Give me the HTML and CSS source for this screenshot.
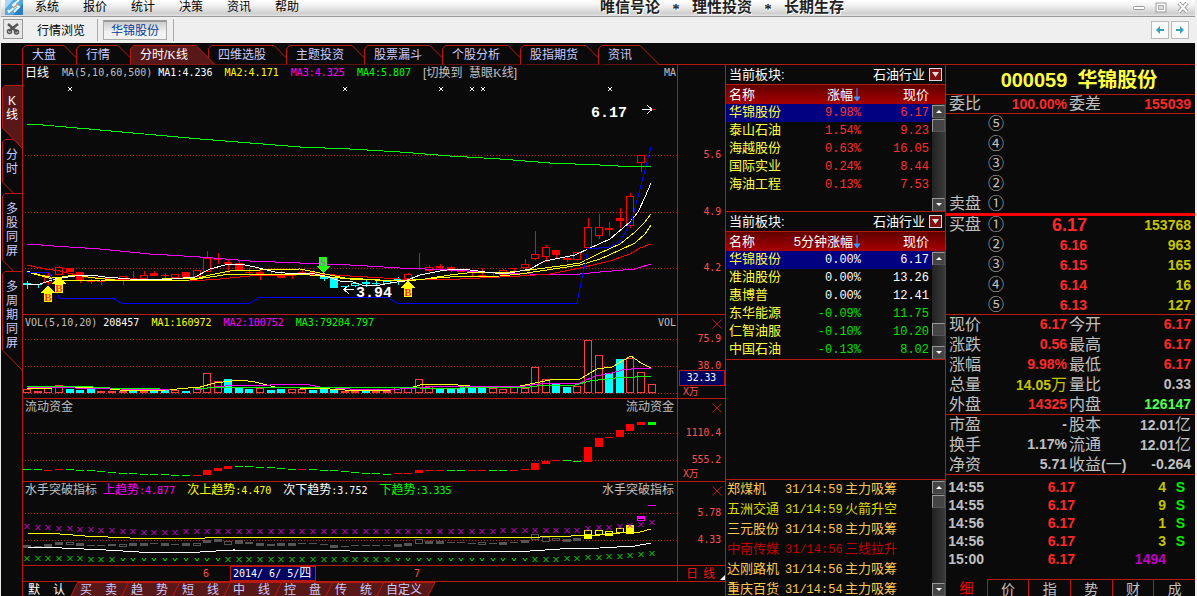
FILE: index.html
```html
<!DOCTYPE html>
<html lang="zh-CN">
<head>
<meta charset="utf-8">
<title>000059 华锦股份</title>
<link rel="stylesheet" href="styles.css">
</head>
<body>
<div class="app">
  <header class="titlebar">
    <svg class="logo" viewBox="0 0 18 15"><rect width="18" height="15" fill="#55a7dc"/><path d="M0 0H8L0 9Z" fill="#a8d8f2"/><path d="M18 3V15H8Z" fill="#2a7fc0"/><path d="M14 0L8 5L10 7L4 12L3 10M9 4L14 7L9 12" fill="none" stroke="#e8f6ff" stroke-width="2"/><path d="M8 8L13 4" stroke="#d8944c" stroke-width="1.500"/></svg>
    <nav class="menu"><button>系统</button><button>报价</button><button>统计</button><button>决策</button><button>资讯</button><button>帮助</button></nav>
    <div class="slogan"><span>唯信号论</span><i>*</i><span>理性投资</span><i>*</i><span>长期生存</span></div>
    <div class="winbtns">
      <button aria-label="最小化"><svg viewBox="0 0 14 12"><rect x="1.500" y="4.500" width="11" height="3" rx="1" fill="#fff" stroke="#999"/></svg></button>
      <button aria-label="最大化"><svg viewBox="0 0 14 12"><rect x="2" y="1" width="10" height="9" fill="#fff" stroke="#999"/><rect x="4.500" y="3.500" width="5" height="4" fill="#ddd" stroke="#aaa"/></svg></button>
      <button aria-label="关闭"><svg viewBox="0 0 14 12"><path d="M3 1L11 10M11 1L3 10" stroke="#999" stroke-width="4"/><path d="M3 1L11 10M11 1L3 10" stroke="#fff" stroke-width="2"/></svg></button>
    </div>
  </header>
  <div class="toolbar">
    <button class="tool" aria-label="工具"><svg viewBox="0 0 18 18"><path d="M4 4L13 12M14 4L5 11" stroke="#555" stroke-width="2.500"/><circle cx="5.500" cy="11.500" r="2" fill="none" stroke="#555" stroke-width="1.500"/><circle cx="12.500" cy="12" r="2" fill="none" stroke="#555" stroke-width="1.500"/></svg></button>
    <button class="plain">行情浏览</button><span class="sep"></span><button class="current">华锦股份</button><span class="sep"></span>
    <div class="history">
      <button aria-label="后退"><svg viewBox="0 0 16 16"><path d="M4 8L8 4V7H12V9H8V12Z" fill="#3aa0c0"/></svg></button>
      <button aria-label="前进"><svg viewBox="0 0 16 16"><path d="M12 8L8 4V7H4V9H8V12Z" fill="#3aa0c0"/></svg></button>
    </div>
  </div>
  <nav class="toptabs">
    <button class="short" data-tab="top">大盘</button><button class="short" data-tab="top">行情</button><button class="on" data-tab="top">分时/<b>K</b>线</button><button data-tab="top">四维选股</button><button data-tab="top">主题投资</button><button data-tab="top">股票漏斗</button><button data-tab="top">个股分析</button><button data-tab="top">股指期货</button><button class="short" data-tab="top">资讯</button>
  </nav>
  <main class="main">
    <nav class="side">
      <button class="on s2" data-tab="side"><span>K</span><span>线</span></button>
      <button class="s2" data-tab="side"><span>分</span><span>时</span></button>
      <button class="s4" data-tab="side"><span>多</span><span>股</span><span>同</span><span>屏</span></button>
      <button class="s5" data-tab="side"><span>多</span><span>周</span><span>期</span><span>同</span><span>屏</span></button>
    </nav>
    <section class="charts">
      <div class="pane">
        <div class="plot">
          <div class="cap"><span class="white">日线</span><code class="gap">MA(5,10,60,500)</code><code class="white">MA1:4.236</code><code class="yellow m2">MA2:4.171</code><code class="mag m2">MA3:4.325</code><code class="lime m2">MA4:5.807</code><span class="m2">[切换到&nbsp; 慧眼<b>K</b>线]</span><code class="end">MA</code></div>
          <svg id="kline" viewBox="23 81 654 233" preserveAspectRatio="none"></svg>
        </div>
        <div class="axis"><div class="cap"></div><svg viewBox="677 81 48 233" preserveAspectRatio="none"><text x="721" y="158">5.6</text><text x="721" y="215">4.9</text><text x="721" y="271">4.2</text></svg></div>
      </div>
      <div class="pane">
        <div class="plot">
          <div class="cap"><code>VOL(5,10,20)</code><code class="white m1">208457</code><code class="yellow m2">MA1:160972</code><code class="mag m2">MA2:100752</code><code class="lime m2">MA3:79204.797</code><code class="end">VOL</code></div>
          <svg id="volume" viewBox="23 331 654 67" preserveAspectRatio="none"></svg>
        </div>
        <div class="axis"><div class="cap"><button class="close" aria-label="关闭"><svg viewBox="0 0 10 10"><path d="M.5 .5L9.500 9.500M9.500 .5L.5 9.500"/></svg></button></div><svg viewBox="677 331 48 67" preserveAspectRatio="none"><text x="721" y="342">75.9</text><text x="721" y="369">38.0</text><text x="698" y="395">X万</text><rect x="678.500" y="370.500" width="46" height="15" fill="#000060" stroke="#bb1810"/><text x="716" y="381" class="wt">32.33</text></svg></div>
      </div>
      <div class="pane">
        <div class="plot">
          <div class="cap"><span>流动资金</span><span class="end">流动资金</span></div>
          <svg id="flow" viewBox="23 415 654 66" preserveAspectRatio="none"></svg>
        </div>
        <div class="axis"><div class="cap"><button class="close" aria-label="关闭"><svg viewBox="0 0 10 10"><path d="M.5 .5L9.500 9.500M9.500 .5L.5 9.500"/></svg></button></div><svg viewBox="677 415 48 66" preserveAspectRatio="none"><text x="721" y="436">1110.4</text><text x="721" y="463">555.2</text><text x="698" y="477">X万</text></svg></div>
      </div>
      <div class="pane">
        <div class="plot">
          <div class="cap"><span>水手突破指标</span><span class="mag m1">上趋势<code>:4.877</code></span><span class="yellow m2">次上趋势<code>:4.470</code></span><span class="white m2">次下趋势<code>:3.752</code></span><span class="lime m2">下趋势<code>:3.335</code></span><span class="end">水手突破指标</span></div>
          <svg id="trend" viewBox="23 498 654 67" preserveAspectRatio="none"></svg>
        </div>
        <div class="axis"><div class="cap"><button class="close" aria-label="关闭"><svg viewBox="0 0 10 10"><path d="M.5 .5L9.500 9.500M9.500 .5L.5 9.500"/></svg></button></div><svg viewBox="677 498 48 67" preserveAspectRatio="none"><text x="721" y="516">5.78</text><text x="721" y="543">4.33</text></svg></div>
      </div>
      <div class="dates">
        <div class="months"><code class="m6">6</code><span class="today"><code>2014/ 6/ 5/</code>四</span><code class="m7">7</code></div>
        <div class="period"><span>日</span><span>线</span><svg viewBox="0 0 8 8"><path d="M8 0V8H0Z" fill="#fff"/></svg></div>
      </div>
      <nav class="bottomtabs">
        <button class="first">默<i></i>认</button><button data-tab="bottom">买<i></i>卖</button><button data-tab="bottom">趋<i></i>势</button><button data-tab="bottom">短<i></i>线</button><button data-tab="bottom">中<i></i>线</button><button data-tab="bottom">控<i></i>盘</button><button data-tab="bottom">传<i></i>统</button><button data-tab="bottom">自定义</button>
      </nav>
    </section>

    <section class="lists">
      <div class="board">
        <div class="pick"><label for="b1">当前板块:</label><select id="b1"><option>石油行业</option></select><svg viewBox="0 0 13 13"><rect x=".5" y=".5" width="12" height="12" fill="#801010" stroke="#ddd"/><path d="M3 4H10L6.500 9Z" fill="#ddd"/></svg></div>
        <div class="body">
          <table><thead><tr><th>名称</th><th>涨幅<svg class="down" viewBox="0 0 8 14"><path d="M4 0V13M1 9L4 13L7 9Z" fill="#3a90ff" stroke="#3a90ff"/></svg></th><th>现价</th></tr></thead>
          <tbody class="red">
            <tr class="sel"><td>华锦股份</td><td>9.98%</td><td>6.17</td></tr>
            <tr><td>泰山石油</td><td>1.54%</td><td>9.23</td></tr>
            <tr><td>海越股份</td><td>0.63%</td><td>16.05</td></tr>
            <tr><td>国际实业</td><td>0.24%</td><td>8.44</td></tr>
            <tr><td>海油工程</td><td>0.13%</td><td>7.53</td></tr>
          </tbody></table>
          <div class="bar"><div class="bhead"></div><div class="track"><button class="up" aria-label="上"></button><div class="thumb"></div><div class="fill"></div><button class="dn" aria-label="下"></button></div></div>
        </div>
      </div>
      <div class="board">
        <div class="pick"><label for="b2">当前板块:</label><select id="b2"><option>石油行业</option></select><svg viewBox="0 0 13 13"><rect x=".5" y=".5" width="12" height="12" fill="#801010" stroke="#ddd"/><path d="M3 4H10L6.500 9Z" fill="#ddd"/></svg></div>
        <div class="body">
          <table><thead><tr><th>名称</th><th>5分钟涨幅<svg class="down" viewBox="0 0 8 14"><path d="M4 0V13M1 9L4 13L7 9Z" fill="#3a90ff" stroke="#3a90ff"/></svg></th><th>现价</th></tr></thead>
          <tbody>
            <tr class="sel"><td>华锦股份</td><td>0.00%</td><td>6.17</td></tr>
            <tr><td>准油股份</td><td>0.00%</td><td>13.26</td></tr>
            <tr><td>惠博普</td><td>0.00%</td><td>12.41</td></tr>
            <tr class="green"><td>东华能源</td><td>-0.09%</td><td>11.75</td></tr>
            <tr class="green"><td>仁智油服</td><td>-0.10%</td><td>10.20</td></tr>
            <tr class="green"><td>中国石油</td><td>-0.13%</td><td>8.02</td></tr>
          </tbody></table>
          <div class="bar"><div class="bhead"></div><div class="track"><button class="up" aria-label="上"></button><div class="fill"></div><div class="thumb"></div><div class="low"></div><button class="dn" aria-label="下"></button></div></div>
        </div>
      </div>
      <div class="blank"></div>
      <div class="alerts">
        <table>
          <tr><td>郑煤机</td><td>31/14:59</td><td>主力吸筹</td></tr>
          <tr class="hot"><td>五洲交通</td><td>31/14:59</td><td>火箭升空</td></tr>
          <tr><td>三元股份</td><td>31/14:58</td><td>主力吸筹</td></tr>
          <tr class="rise"><td>中南传媒</td><td>31/14:56</td><td>三线拉升</td></tr>
          <tr><td>达刚路机</td><td>31/14:56</td><td>主力吸筹</td></tr>
          <tr><td>重庆百货</td><td>31/14:54</td><td>主力吸筹</td></tr>
        </table>
        <div class="bar"><div class="track"><button class="up" aria-label="上"></button><div class="thumb"></div><div class="fill"></div><button class="dn" aria-label="下"></button></div></div>
      </div>
    </section>

    <section class="quote">
      <h1>000059<span>华锦股份</span></h1>
      <div class="stats tight"><span>委比</span><b class="red">100.00%</b><span>委差</span><b class="red">155039</b></div>
      <div class="depth sell">
        <span></span><i>⑤</i><b></b><b></b><span></span><i>④</i><b></b><b></b><span></span><i>③</i><b></b><b></b><span></span><i>②</i><b></b><b></b><span>卖盘</span><i>①</i><b></b><b></b>
      </div>
      <div class="depth buy">
        <span>买盘</span><i>①</i><b class="big">6.17</b><b>153768</b><span></span><i>②</i><b>6.16</b><b>963</b><span></span><i>③</i><b>6.15</b><b>165</b><span></span><i>④</i><b>6.14</b><b>16</b><span></span><i>⑤</i><b>6.13</b><b>127</b>
      </div>
      <div class="stats">
        <span>现价</span><b class="red">6.17</b><span>今开</span><b class="red">6.17</b>
        <span>涨跌</span><b class="red">0.56</b><span>最高</span><b class="red">6.17</b>
        <span>涨幅</span><b class="red">9.98%</b><span>最低</span><b class="red">6.17</b>
        <span>总量</span><b class="gold">14.05<em>万</em></b><span>量比</span><b>0.33</b>
        <span>外盘</span><b class="red">14325</b><span>内盘</span><b class="bright">126147</b>
      </div>
      <div class="stats">
        <span>市盈</span><b>-</b><span>股本</span><b>12.01<em>亿</em></b>
        <span>换手</span><b>1.17%</b><span>流通</span><b>12.01<em>亿</em></b>
        <span>净资</span><b>5.71</b><span>收益<b>(</b>一<b>)</b></span><b>-0.264</b>
      </div>
      <table class="ticks">
        <tr><td>14:55</td><td>6.17</td><td>4</td><td>S</td></tr>
        <tr><td>14:55</td><td>6.17</td><td>9</td><td>S</td></tr>
        <tr><td>14:56</td><td>6.17</td><td>1</td><td>S</td></tr>
        <tr><td>14:56</td><td>6.17</td><td>3</td><td>S</td></tr>
        <tr><td>15:00</td><td>6.17</td><td class="purple">1494</td><td></td></tr>
      </table>
      <nav class="qtabs"><button class="on">细</button><button>价</button><button>指</button><button>势</button><button>财</button><button>成</button></nav>
    </section>
  </main>
</div>
<script src="charts.js"></script>
</body>
</html>
```
FILE: styles.css
```css
* { box-sizing: border-box; }
body {
  margin: 0;
  background: #0a0a0a;
  color: #c0c0c0;
  font: 12px/16px "Liberation Sans", "Noto Sans CJK SC", sans-serif;
}
button, select {
  margin: 0; padding: 0; border: 0; background: none;
  color: inherit; font: inherit; white-space: nowrap;
}
i, em { font-style: normal; }
svg { display: block; }
code { font: 10px/16px "DejaVu Sans Mono", monospace; }
.white { color: #fff; }
.yellow { color: #ff0; }
.mag { color: #f0f; }
.lime { color: #0f0; }
.red { color: #ff2828; }
.gold { color: #c4c400; }
.bright { color: #50ff50; }

.app {
  display: flex; flex-direction: column;
  height: 100vh; overflow: hidden;
  border-left: 1px solid #e8e8e8; border-right: 2px solid #efefef;
}

/* window chrome */
.titlebar {
  display: grid; grid-template-columns: 22px 1fr auto 1fr; flex: none;
  height: 17px; padding-left: 4px; overflow: hidden;
  background: linear-gradient(#fff, #f4f4f4 30%, #cfcfcf 85%, #e4e4e4);
  border-bottom: 1px solid #999; color: #000;
}
.logo { width: 18px; height: 15px; }
.menu { display: flex; gap: 24px; padding-left: 8px; }
.menu button { height: 14px; line-height: 14px; }
.slogan {
  display: flex; height: 15px; padding-left: 222px;
  font: bold 15px/14px "Liberation Serif", "Noto Sans CJK SC", serif;
  text-shadow: 1px 1px #fff, -1px 0 #fff; color: #222;
}
.slogan i { width: 32px; text-align: center; line-height: 18px; }
.winbtns { display: flex; justify-content: flex-end; gap: 8px; padding-right: 5px; }
.winbtns svg { width: 14px; height: 12px; }
.toolbar {
  display: flex; align-items: center; flex: none;
  height: 26px; padding: 0 6px 0 2px; background: #efefef; color: #000;
}
.tool { width: 20px; height: 20px; margin-bottom: 3px; border: 1px solid #999; background: #e8e8e8; }
.tool svg { width: 18px; height: 18px; }
.plain { padding: 0 12px 0 14px; margin-top: 2px; }
.sep { width: 1px; height: 22px; background: #aaa; }
.current {
  width: 64px; height: 20px; margin: 0 6px 0 5px; color: #003c9c;
  border: 1px solid #aaa; border-top: 2px solid #999;
  background: linear-gradient(#ccc, #f2f2f2 60%);
}
.history { display: flex; gap: 2px; margin-left: auto; }
.history button { width: 18px; height: 18px; border: 1px solid #bbb; background: #fafafa; }
.history svg { width: 16px; height: 16px; }

/* outlined tabs */
.toptabs {
  display: flex; flex: none; height: 22px; padding: 2px 0 0 21px;
  border-bottom: 1px solid #bb1810; color: #ccf;
}
[data-tab] { position: relative; z-index: 0; }
.shape {
  position: absolute; z-index: -1; top: 0; left: 0; overflow: visible;
  fill: #0a0a0a; stroke: #bb1810;
}
.toptabs button { width: 78px; padding-left: 10px; text-align: left; }
.toptabs .short { width: 54px; }
.toptabs .on, .side .on { z-index: 1; color: #fff; }
.on > .shape { fill: #581818; }
b { font-weight: normal; }
.toptabs b, .cap b { font-family: "Liberation Serif", serif; }

.main {
  display: grid; grid-template-columns: 22px minmax(0, 1fr) 220px 249px;
  flex: 1; min-height: 0;
}
.side {
  display: flex; flex-direction: column; padding-top: 20px;
  border-right: 1px solid #bb1810; color: #ccf;
}
.side button {
  display: flex; flex-direction: column; align-items: center;
  width: 21px; padding: 9px 0 0 1px; line-height: 14px;
}
.side span:first-child { font-family: "Liberation Serif", "Noto Sans CJK SC", serif; }
.side .s2 { height: 54px; }
.side .s4 { height: 78px; }
.side .s5 { height: 90px; }

.charts {
  display: grid; min-width: 0; min-height: 0;
  grid-template-rows: minmax(0, 250fr) minmax(0, 84fr) minmax(0, 83fr) minmax(0, 84fr) 16px 14px;
  border-right: 1px solid #bb1810;
}
.pane { display: grid; grid-template-columns: minmax(0, 1fr) 48px; border-bottom: 1px solid #bb1810; min-height: 0; }
.plot, .axis { display: flex; flex-direction: column; min-width: 0; min-height: 0; }
.plot > svg, .axis > svg { flex: 1; width: 100%; min-height: 0; }
.axis { border-left: 1px solid #bb1810; }
.axis text { font: 10px "DejaVu Sans Mono", "Noto Sans CJK SC", monospace; fill: #ff5050; text-anchor: end; }
.axis .wt { fill: #fff; }
.cap { display: flex; flex: none; height: 16px; padding: 0 1px 0 2px; white-space: nowrap; }
.cap .gap { margin: 0 6px 0 13px; }
.m1 { margin-left: 6px; }
.m2 { margin-left: 12px; }
.end { margin-left: auto; }
.cap span.end { padding-right: 2px; }
.close { margin: 4px 2px 0 auto; width: 10px; height: 10px; }
.close path { stroke: #bb1810; }
#kline, #volume, #flow, #trend { shape-rendering: crispEdges; }
.note { font: bold 15px "Liberation Mono", monospace; fill: #fff; }
.flag { font: bold 11px "Liberation Serif", serif; text-anchor: middle; }

.dates { display: grid; grid-template-columns: minmax(0, 1fr) 48px; border-bottom: 1px solid #bb1810; }
.months { display: flex; height: 15px; color: #ff5050; }
.m6 { margin-left: 180px; width: 27px; }
.months .m7 { margin-left: 98px; }
.today {
  display: flex; width: 86px; padding-left: 2px; line-height: 13px;
  background: #000060; border: 1px solid #bb1810; color: #fff; white-space: pre;
}
.today code { line-height: 13px; }
.period { display: flex; gap: 5px; padding-left: 8px; color: #f01010; border-left: 1px solid #bb1810; }
.period svg { width: 7px; height: 7px; margin: 8px 0 0 auto; }
.bottomtabs { display: flex; overflow: hidden; color: #ccf; }
.bottomtabs button { display: flex; width: 51px; height: 16px; padding-left: 6px; line-height: 16px; flex: none; }
.bottomtabs .first { padding-left: 5px; color: #fff; }
.bottomtabs i { width: 13px; }
.bottomtabs .shape { fill: #581818; }

/* sector lists */
.lists { display: flex; flex-direction: column; min-height: 0; border-right: 1px solid #bb1810; font-size: 13px; }
.pick { display: flex; align-items: center; height: 20px; padding: 0 3px 0 3px; border-bottom: 1px solid #bb1810; color: #fff; line-height: 18px; }
.pick select { margin-left: auto; appearance: none; outline: none; height: 18px; }
.pick > svg { width: 13px; height: 13px; margin-left: 3px; }
.body { display: flex; border-bottom: 1px solid #bb1810; min-height: 127px; }
.lists table { flex: 1; border-collapse: collapse; align-self: flex-start; table-layout: fixed; }
.lists th { height: 19px; padding: 0; font-weight: normal; color: #fff; text-align: right; line-height: 18px; }
.lists thead, .bhead { background: linear-gradient(#600000, #a80000); }
.lists th:first-child { text-align: left; padding-left: 3px; width: 60px; }
.lists th:last-child { width: 71px; padding-right: 3px; }
.down { display: inline-block; width: 8px; height: 14px; vertical-align: -3px; }
.lists td { height: 18px; padding: 0; line-height: 18px; color: #fff; text-align: right; font-family: "Liberation Mono", "Noto Sans CJK SC", monospace; font-size: 12px; }
.lists .board td:first-child { padding-left: 3px; text-align: left; color: #ff4; font-size: 13px; }
.board td:last-child { padding-right: 3px; }
.lists .red td { color: #ff3030; }
.lists .green td { color: #00e000; }
.lists tr.sel { background: #000080; }
.bar { display: flex; flex-direction: column; width: 13px; flex: none; }
.bhead { height: 19px; }
.track { display: flex; flex-direction: column; flex: 1; background: linear-gradient(90deg, #222, #3a3a3a); padding-top: 1px; }
.track button, .thumb { height: 13px; flex: none; border: 1px solid #888; border-color: #999 #555 #555 #999; background: #444; }
.thumb { margin-top: 1px; }
.fill { flex: 1; }
.low { height: 10px; }
.up::before, .dn::before { content: ""; display: block; width: 0; margin: auto; border: 3px solid transparent; }
.up::before { border-top: 0; border-bottom-color: #fff; }
.dn::before { border-bottom: 0; border-top-color: #fff; }
.blank { height: 120px; border-bottom: 1px solid #bb1810; }
.alerts { display: flex; flex: 1; min-height: 0; overflow: hidden; }
.lists .alerts td { height: 20px; font-size: 12px; color: #ffc850; text-align: left; padding-left: 1px; }
.lists .alerts td:first-child, .lists .alerts td:last-child { font-size: 13px; }
.lists .alerts td:first-child { width: 58px; }
.lists .alerts td:nth-child(2) { width: 60px; }
.lists .alerts .hot td { color: #dcdc00; }
.lists .alerts .rise td { color: #c00000; }

/* quote panel */
.quote { display: flex; flex-direction: column; min-height: 0; overflow: hidden; font-size: 16px; }
.quote b { font-family: "Liberation Sans", "Noto Sans CJK SC", sans-serif; font-size: 14px; font-weight: bold; }
h1 {
  display: flex; justify-content: center; gap: 10px; flex: none; height: 30px; margin: 0; padding-left: 17px;
  border-bottom: 1px solid #bb1810; color: #ff4; font: bold 20px/30px "Liberation Sans", "Noto Sans CJK SC", sans-serif;
}
.stats {
  display: grid; grid-template-columns: 36px 80px auto 1fr; column-gap: 2px;
  grid-auto-rows: 19px; row-gap: 1px;
  padding: 0 4px 0 3px; line-height: 19px; border-bottom: 1px solid #bb1810;
}
.stats > b { text-align: right; }
.stats > span { white-space: nowrap; }
.stats em { font-size: 16px; font-weight: normal; }
.tight { grid-auto-rows: 18px; line-height: 18px; }
.depth {
  display: grid; grid-template-columns: 39px 32px 67px 1fr; padding: 0 4px 0 3px; line-height: 20px;
  grid-auto-rows: 20px;
}
.sell { border-bottom: 3px solid #f00; height: 102px; }
.buy { border-bottom: 1px solid #bb1810; height: 99px; line-height: 18px; }
.depth b { text-align: right; color: #c4c400; }
.depth b:nth-child(4n+3) { color: #ff2828; }
.depth .big { font-size: 18px; }
.ticks { border-collapse: collapse; margin-top: 3px; height: 90px; font: bold 14px/18px "Liberation Sans", sans-serif; }
.ticks td { padding: 0; height: 18px; text-align: right; color: #c4c400; }
.ticks td:first-child { width: 38px; color: #c0c0c0; }
.ticks td:nth-child(2) { color: #ff2828; width: 91px; }
.ticks td:nth-child(3) { width: 91px; }
.ticks td:last-child { color: #00f000; padding-right: 10px; }
.ticks td.purple { color: #c000c0; }
.qtabs { display: flex; margin-top: 11px; }
.qtabs button { flex: 1; height: 18px; border-top: 1px solid #bb1810; border-left: 1px solid #bb1810; line-height: 18px; font-size: 14px; }
.qtabs .on { border: 0; color: #f00; }
```
FILE: charts.js
```js
const NS = 'http://www.w3.org/2000/svg';
const xAt = i => Math.round(27.3 + 10.58 * i);
const RED = '#ff0000', CYAN = '#00ffff', SOFT = '#ff4040';

function add(parent, tag, attrs, text) {
  const node = document.createElementNS(NS, tag);
  for (const k in attrs) node.setAttribute(k, attrs[k]);
  if (text) node.textContent = text;
  parent.appendChild(node);
  return node;
}
function line(svg, color, points) {
  add(svg, 'polyline', { points, fill: 'none', stroke: color, 'stroke-width': 1 });
}
function grid(svg, ys) {
  for (const y of ys) add(svg, 'path', { d: `M25 ${y}.5H677`, stroke: '#d01010', 'stroke-dasharray': '1 2' });
}
function box(svg, i, top, bottom, color, hollow) {
  const x = xAt(i) - 4;
  if (hollow) add(svg, 'rect', { x: x + .5, y: Math.round(top) + .5, width: 7, height: Math.max(2, Math.round(bottom - top) - 1), fill: '#0a0a0a', stroke: color });
  else add(svg, 'rect', { x, y: Math.round(top), width: 8, height: Math.max(1, Math.round(bottom - top)), fill: color });
}
function cross(svg, x, y, r, color) {
  add(svg, 'path', { d: `M${x - r} ${y - r}L${x + r} ${y + r}M${x + r} ${y - r}L${x - r} ${y + r}`, stroke: color, 'shape-rendering': 'auto' });
}

/* kind, body top, body bottom, high, low */
const candles = [
  ['C',283,285,281,289],['C',284,285,284,288],['r',275,283,272,285],['r',267,275,266,275],['R',268,272,268,272],['R',272,281,272,283],
  ['R',281,282,279,284],['R',281,282,281,285],['R',280,281,280,281],['r',276,281,276,285],['R',278,279,271,279],['r',275,279,271,279],
  ['R',273,276,271,276],['R',275,276,273,278],['r',274,278,274,278],['R',272,279,272,279],['r',270,277,270,281],['r',258,272,251,272],
  ['R',258,260,253,264],['R',262,264,259,273],['R',263,270,260,270],['R',272,273,268,275],['R',272,274,270,280],['R',274,276,272,276],
  ['R',274,278,271,278],['R',275,276,274,279],['R',272,273,270,275],['R',272,276,272,276],['C',276,279,273,281],['C',278,288,278,288],
  ['C',286,287,286,290],['c',283,286,282,287],['C',282,284,280,287],['C',283,284,281,285],['c',281,284,281,284],['C',279,280,277,285],
  ['r',274,279,273,281],['R',268,269,253,270],['r',267,271,265,273],['R',266,268,264,270],['R',267,271,266,272],['R',269,272,269,272],
  ['R',271,273,270,276],['R',275,276,268,277],['R',272,273,272,276],['r',270,275,269,276],['R',268,269,268,273],['r',264,268,259,271],
  ['r',254,259,231,260],['r',247,257,245,262],['R',250,255,250,258],['R',258,260,256,262],['r',252,260,252,261],['r',227,248,218,248],
  ['r',227,236,214,239],['R',228,230,222,236],['R',218,221,208,228],['r',196,226,193,228],['r',155,163,155,172]
];
const k = document.getElementById('kline');
grid(k, [155, 212, 268]);
candles.forEach(([kind, top, bottom, high, low], i) => {
  const color = kind.toUpperCase() === 'R' ? RED : CYAN;
  add(k, 'path', { d: `M${xAt(i) + .5} ${high}V${low}`, stroke: color });
  box(k, i, top, bottom, color, kind === kind.toLowerCase());
});
line(k, '#00ff00', '27,124 43,125 100,130 200,139 300,147 350,149 400,152 450,156 500,159 550,163 600,165 618,166 651,166');
line(k, '#ff00ff', '27,244 54,246 100,249 150,254 200,257 250,261 300,263 350,265 400,268 450,270 500,273 530,274 580,274 600,272 635,269 651,264');
line(k, '#ff0000', '27,265 45,269 60,271 85,277 110,279 150,280 190,281 220,279 250,276 290,275 320,274 350,276 400,279 440,280 480,278 520,276 550,274 580,268 610,261 630,254 640,248 651,244');
line(k, '#ffff00', '27,271 40,275 55,278 75,275 95,278 125,281 150,280 175,278 195,279 210,275 235,270 260,270 300,269 320,273 345,278 380,280 408,281 425,279 450,275 475,272 510,272 530,270 560,266 580,263 600,253 620,244 635,232 645,222 651,214');
line(k, '#ffff00', '27,272 60,281 80,280 100,280 140,281 190,280 230,274 300,274 350,279 400,281 450,277 500,276 520,274 560,268 580,265 600,259 620,250 635,243 645,234 651,225');
line(k, '#ffffff', '27,284 40,284 55,279 75,276 90,275 105,277 130,279 160,280 195,277 210,269 225,265 240,264 255,267 275,272 295,274 310,273 325,276 340,281 350,281 362,285 375,286 390,283 405,281 420,275 440,271 455,269 470,270 485,272 505,274 520,271 530,269 545,261 560,258 575,255 590,248 610,239 630,222 638,212 645,197 651,183');
line(k, '#0000ff', '27,272 49,272 55,284 59,298 113,298 121,303 250,303 260,297 387,297 397,303 577,303 588,249 610,247 620,242 632,220 641,185 651,147');
for (const x of [70, 345, 441, 472, 483, 610]) cross(k, x, 89, 2, '#fff');
for (const [x, y] of [[48, 286], [59, 277], [408, 281]]) {
  add(k, 'path', { d: `M${x} ${y}L${x + 8} ${y + 7}H${x + 4}V${y + 16}H${x - 4}V${y + 7}H${x - 8}Z`, fill: '#ff0' });
  add(k, 'text', { x, y: y + 15, class: 'flag', fill: '#ff3030' }, 'B');
}
add(k, 'path', { d: 'M323 273L330 266H327V257H319V266H316Z', fill: '#22ff11' });
add(k, 'text', { x: 323, y: 266, class: 'flag', fill: '#a070a0' }, 'S');
add(k, 'text', { x: 591, y: 117, class: 'note' }, '6.17');
add(k, 'path', { d: 'M642 109.500H652M647 105L652 109.500L647 114', stroke: '#fff', fill: 'none' });
add(k, 'path', { d: 'M652 109.500H655', stroke: RED });
add(k, 'text', { x: 356, y: 297, class: 'note' }, '3.94');
add(k, 'path', { d: 'M354 289.500H344M349 285L344 289.500L349 294', stroke: '#fff', fill: 'none' });

const v = document.getElementById('volume');
grid(v, [339, 366, 393]);
const kinds = 'rRrrCCCRRRCRCCrCrrrCCCrCCrrCCCRRCRRrrrrCCCCCrrrrrrCCrrrCCrrr';
const tops = [389,391,388,385,389,390,388,391,391,391,390,391,390,390,390,391,387,373,381,379,388,389,388,390,389,389,389,390,389,389,391,391,391,390,390,387,388,379,386,388,388,388,387,387,388,389,387,388,367,379,384,387,386,340,355,373,359,358,372,384];
tops.forEach((top, i) => box(v, i, top, 393, kinds[i] === 'C' ? CYAN : SOFT, kinds[i] === 'r'));
line(v, '#ffff00', '27,388 45,389 60,387 100,388 120,390 165,390 200,387 215,383 240,380 255,382 275,387 300,388 330,389 360,391 390,390 410,388 420,385 445,384 470,386 500,386 520,386 535,383 555,379 580,379 597,369 612,367 631,356 641,363 651,368');
line(v, '#ff00ff', '27,387 75,388 120,389 170,390 195,390 215,387 235,385 270,385 285,384 305,384 320,387 350,389 400,389 430,387 465,386 525,386 540,384 580,383 595,376 612,373 622,370 640,368 651,369');
line(v, '#00ff00', '27,386 75,386 110,388 160,389 195,389 220,387 350,387 390,387 420,388 460,388 500,387 530,387 545,385 575,385 590,381 615,378 635,377 651,376');

const f = document.getElementById('flow');
grid(f, [433, 460]);
const flowColors = 'ggrrggggggggggggrrrrggggggrggggggggrrrrrggrrggrrrrrggrrrrrrg';
const flow = [469,469,470,469,469,470,470,471,472,473,473,474,474,474,475,475,475,[470,475],[468,471],[466,469],466,466,467,467,468,469,469,469,470,470,471,472,473,473,474,473,473,[470,473],470,470,470,470,470,470,470,470,470,469,[463,470],[461,464],460,460,461,[447,462],[438,447],437,[430,437],[424,431],[422,425],[422,425]];
flow.forEach((b, i) => {
  const [top, bottom] = Array.isArray(b) ? b : [b, b + 1];
  box(f, i, top, bottom, flowColors[i] === 'g' ? '#00ff00' : RED);
});

const t = document.getElementById('trend');
grid(t, [513, 540]);
/* top, bottom, hollow */
const bodies = [[545,548],[546,547],[544,547],[542,545],[542,545,1],[543,546],[545,546],[545,546],[544,546],[544,547,1],[543,546],[543,546],[543,544],[543,546],[544,545],[543,546],[543,546,1],[540,543],[539,542],[541,545,1],[540,544],[542,544],[543,546],[544,546],[543,546],[543,546],[543,544],[543,544],[544,545],[545,548],[546,547],[545,546],[545,546],[545,546],[545,546],[544,547],[543,546],[539,544,1],[541,544],[541,544],[542,543],[542,543],[543,544],[542,545,1],[543,544],[542,545],[542,543],[540,543],[534,540,1],[537,542,1],[538,541,1],[539,542],[538,541],[530,539,1],[530,535,1],[531,536,1],[528,533,1],[525,534],[516,521,1],[505,506]];
bodies.forEach(([top, bottom, hollow], i) => box(t, i, top, bottom, i < 53 ? '#555' : i < 58 ? '#ff0' : '#f0f', hollow));
box(t, 53, 534, 539, '#ff0');
box(t, 55, 533, 536, '#ff0');
box(t, 58, 516, 519, '#f0f');
line(t, '#ffff00', '27,533 60,534 85,536 130,538 205,538 212,537 540,537 571,536 600,535 620,533 640,532 651,529');
line(t, '#ffffff', '27,547 62,548 106,550 139,552 200,552 233,550 350,551 530,551 560,549 600,548 635,546 651,543');
const upper = [526,527,527,528,528,529,529,530,530,531,531,532,532,532,532];
const upperEnd = [528,527,527,526,525,524,522];
for (let i = 0; i < 60; i++) {
  cross(t, xAt(i), (i < 15 ? upper[i] : i > 52 ? upperEnd[i - 53] : i > 44 ? 530 : 531) + .5, 2.5, '#e800e8');
  const y = i < 6 ? 558 : i < 51 ? 559 : [558,558,557,557,556,556,555,554,553][i - 51];
  if ((i > 8 && i < 19) || (i > 34 && i < 48)) add(t, 'path', { d: `M${xAt(i) - 2} ${y - 1}L${xAt(i)} ${y + 2}L${xAt(i) + 2} ${y - 1}`, stroke: '#00f000', fill: 'none', 'shape-rendering': 'auto' });
  else cross(t, xAt(i), y + .5, 2.5, '#00f000');
}

/* tab outlines follow the size of each tab */
document.querySelectorAll('[data-tab]').forEach(tab => {
  const w = tab.offsetWidth, h = tab.offsetHeight;
  const svg = document.createElementNS(NS, 'svg');
  const kind = tab.dataset.tab;
  const d = kind === 'top' ? `M.5 19.500V4L3.500 .5H${w - 12}L${w + 7} 19.500`
    : kind === 'side' ? `M21 .5H4L1.500 3V${h - 11}L21 ${h + 9}`
    : `M-4 16L3.500 .5H${w + 4}L${w - 4} 16`;
  svg.setAttribute('class', 'shape');
  svg.setAttribute('width', w);
  svg.setAttribute('height', h);
  add(svg, 'path', { d });
  tab.prepend(svg);
});
```
